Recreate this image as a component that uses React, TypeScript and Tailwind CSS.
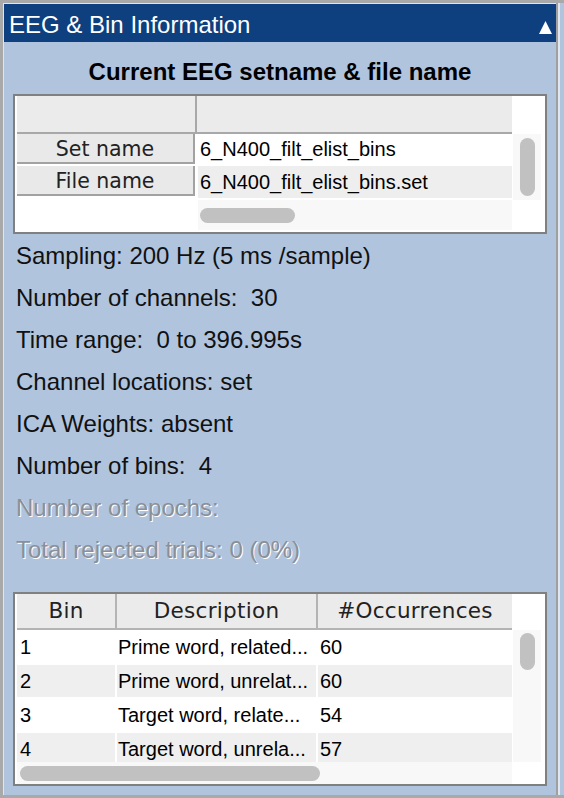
import React from "react"

const sans = "font-['Liberation_Sans',Arial,sans-serif]"
const grande = "font-['DejaVu_Sans',sans-serif]"

const info = [
  "Sampling: 200 Hz (5 ms /sample)",
  "Number of channels:  30",
  "Time range:  0 to 396.995s",
  "Channel locations: set",
  "ICA Weights: absent",
  "Number of bins:  4",
]

const disabled = ["Number of epochs:", "Total rejected trials: 0 (0%)"]

const bins = [
  { bin: "1", desc: "Prime word, related...", n: "60" },
  { bin: "2", desc: "Prime word, unrelat...", n: "60" },
  { bin: "3", desc: "Target word, relate...", n: "54" },
  { bin: "4", desc: "Target word, unrela...", n: "57" },
]

function FileTable() {
  return (
    <div className="ml-[9px] w-[534px] h-[140px] border-2 border-[#808080] bg-white flex flex-col">
      <div className="flex pl-[2px] h-[38px]">
        <div className="w-[180px] bg-[#ebebeb] border-r-2 border-b-2 border-[#a8a8a8]" />
        <div className="w-[315px] bg-[#ebebeb] border-b-2 border-[#a8a8a8]" />
      </div>
      <div className="flex pl-[2px] h-[66px]">
        <div className="flex flex-col gap-[2px] w-[178px]">
          {["Set name", "File name"].map((t) => (
            <div
              key={t}
              className={`h-[30px] bg-[#e9e9e9] border-r-2 border-b-2 border-[#a2a2a2] flex items-center justify-center pt-[3px] text-[20.5px] text-[#222] ${grande}`}
            >
              {t}
            </div>
          ))}
        </div>
        <div className="ml-[3px] w-[314px] flex flex-col gap-[2px]">
          <div className={`h-[30px] bg-white flex items-center pl-[2px] text-[20px] text-black ${sans}`}>
            6_N400_filt_elist_bins
          </div>
          <div className={`h-[32px] bg-[#eeeeee] flex items-center pl-[2px] text-[20px] text-black ${sans}`}>
            6_N400_filt_elist_bins.set
          </div>
        </div>
        <div className="w-[1px]" />
        <div className="w-[28px] h-[66px] bg-[#f8f8f8] flex justify-center py-[4px]">
          <div className="w-[15px] rounded-full bg-[#c1c1c1]" />
        </div>
      </div>
      <div className="flex pl-[183px] h-[30px] bg-white">
        <div className="w-[314px] bg-[#f8f8f8] pt-[8px] pl-[2px]">
          <div className="w-[95px] h-[15px] rounded-full bg-[#c1c1c1]" />
        </div>
      </div>
    </div>
  )
}

function BinTable() {
  return (
    <div className="ml-[9px] mt-[21px] w-[534px] h-[194px] border-2 border-[#808080] bg-white flex flex-col">
      <div className={`flex pl-[2px] h-[36px] text-[21.5px] tracking-[0.3px] text-[#222] ${grande}`}>
        <div className="w-[100px] bg-[#ebebeb] border-r-2 border-b-2 border-[#b4b4b4] flex items-center justify-center">
          Bin
        </div>
        <div className="w-[201px] bg-[#ebebeb] border-r-2 border-b-2 border-[#b4b4b4] flex items-center justify-center">
          Description
        </div>
        <div className="w-[194px] bg-[#ebebeb] border-b-2 border-[#b4b4b4] flex items-center justify-center">
          #Occurrences
        </div>
      </div>
      <div className="flex h-[132px] pl-[2px]">
        <div className={`w-[495px] h-[132px] overflow-hidden flex flex-col gap-[2px] pt-[1px] text-[20px] text-black ${sans}`}>
          {bins.map((r, i) => {
            const bg = i % 2 === 1 ? "bg-[#efefef]" : "bg-white"
            return (
              <div key={r.bin} className="flex gap-[2px] h-[32px] shrink-0">
                <div className={`w-[98px] flex items-center pl-[3px] ${bg}`}>{r.bin}</div>
                <div className={`w-[199px] flex items-center pl-[1px] ${bg}`}>{r.desc}</div>
                <div className={`w-[194px] flex items-center pl-[2px] ${bg}`}>{r.n}</div>
              </div>
            )
          })}
        </div>
        <div className="w-[1px]" />
        <div className="w-[28px] h-[132px] bg-[#f8f8f8] flex justify-center pt-[3px]">
          <div className="w-[15px] h-[37px] rounded-full bg-[#c1c1c1]" />
        </div>
      </div>
      <div className="flex pl-[2px] h-[22px]">
        <div className="w-[495px] bg-[#f8f8f8] pt-[4px] pl-[3px]">
          <div className="w-[300px] h-[15px] rounded-full bg-[#c1c1c1]" />
        </div>
      </div>
    </div>
  )
}

export default function App() {
  return (
    <div className="w-[564px] h-[798px] bg-[#a9a9a9] flex pt-[3px] pl-[3px] pb-[3px]">
      <div className="w-[553px] h-full border-l border-t border-[#e4e4e4] bg-[#b0c4de] flex flex-col">
        <div className="h-[38px] bg-[#0e3f7e] flex items-center justify-between pl-[5px] pr-[4px]">
          <span className={`text-white text-[24px] pt-[3px] ${sans}`}>EEG &amp; Bin Information</span>
          <svg width="13" height="13" viewBox="0 0 13 13" className="mt-[9px]">
            <polygon points="6.5,0 13,13 0,13" fill="#ffffff" />
          </svg>
        </div>
        <div className={`mt-[16px] h-[28px] leading-[28px] text-center font-bold text-[24px] text-black ${sans}`}>
          Current EEG setname &amp; file name
        </div>
        <div className="mt-[8px]">
          <FileTable />
        </div>
        <div className={`mt-[1px] pl-[12px] flex flex-col text-[24px] ${sans}`}>
          {info.map((t) => (
            <div key={t} className="h-[42px] leading-[42px] text-[#111] whitespace-pre">
              {t}
            </div>
          ))}
          {disabled.map((t) => (
            <div
              key={t}
              className="h-[42px] leading-[42px] text-[#8a8f98] whitespace-pre [text-shadow:1px_1px_0_#ffffff]"
            >
              {t}
            </div>
          ))}
        </div>
        <BinTable />
      </div>
      <div className="w-[2px] h-full bg-[#a0a0a0]" />
      <div className="w-[2px] h-full bg-[#dfe6ef]" />
      <div className="flex-1 h-full bg-[#b0c4de]" />
    </div>
  )
}
